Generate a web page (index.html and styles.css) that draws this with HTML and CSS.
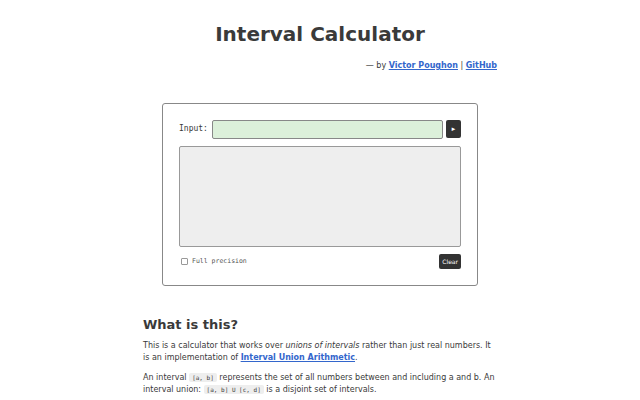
FILE: index.html
```html
<html>
<head>
    <title>Interval Calculator</title>
    <link rel="stylesheet" href="styles.css">
</head>
<body>
    <div class="page">
        <h1>Interval Calculator</h1>
        <p class="byline">— by <a href="#">Victor Poughon</a> | <a href="#">GitHub</a></p>

        <div class="calc">
            <div class="input-row">
                <label class="mono" for="expr">Input:</label>
                <input id="expr" class="expr" type="text">
                <button class="go">&#9658;</button>
            </div>
            <div class="output"></div>
            <div class="bottom-row">
                <label class="precision"><input type="checkbox"> Full precision</label>
                <button class="clear">Clear</button>
            </div>
        </div>

        <h2>What is this?</h2>
        <p>This is a calculator that works over <em>unions of intervals</em> rather than just real numbers. It is an implementation of <a href="#">Interval Union Arithmetic</a>.</p>
        <p>An interval <code>[a, b]</code> represents the set of all numbers between and including a and b. An interval union: <code>[a, b] U [c, d]</code> is a disjoint set of intervals.</p>
    </div>
</body>
</html>
```

FILE: styles.css
```css
* { margin: 0; padding: 0; box-sizing: border-box; }
body { background: #fff; color: #3a3a3a; font-family: "DejaVu Sans", sans-serif; font-size: 8px; line-height: 12.5px; }
.page { width: 354px; margin: 0 auto; padding-top: 22px; }
h1 { text-align: center; font-size: 20px; line-height: 24px; font-weight: bold; color: #3a3a3a; }
.byline { text-align: right; margin-top: 14px; }
a { color: #3366cc; font-weight: bold; }
.calc { width: 316px; margin: 30px auto 0; border: 1px solid #888; border-radius: 3px; padding: 16px 16px 16px; }
.mono { font-family: "DejaVu Sans Mono", monospace; }
.input-row { display: flex; align-items: center; height: 19px; }
.input-row label { width: 33px; font-size: 8px; }
.expr { width: 231px; height: 19px; background: #dcf0da; border: 1px solid #888; border-radius: 2px; }
.go { width: 15px; height: 18px; margin-left: 3px; background: #333; color: #fff; border: none; border-radius: 2px; font-size: 6px; }
.output { height: 101px; margin-top: 7px; background: #eee; border: 1px solid #999; border-radius: 2px; }
.bottom-row { display: flex; justify-content: space-between; align-items: center; margin-top: 7px; }
.precision { color: #555; font-family: "DejaVu Sans Mono", monospace; font-size: 6.5px; display: flex; align-items: center; gap: 4px; margin-left: 2px; }
.precision input { appearance: none; width: 7px; height: 7px; margin: 0; border: 1px solid #999; border-radius: 1px; background: #fff; }
.clear { background: #333; color: #fff; border: none; border-radius: 2px; font-family: "DejaVu Sans", sans-serif; font-size: 6px; padding: 3px 3px; height: 15px; }
h2 { font-size: 13px; line-height: 16px; margin-top: 31px; margin-bottom: 7px; }
p { margin-bottom: 7px; }
code { font-family: "DejaVu Sans Mono", monospace; font-size: 6px; line-height: 8px; background: #eee; padding: 1px 3px; border-radius: 2px; }
```
